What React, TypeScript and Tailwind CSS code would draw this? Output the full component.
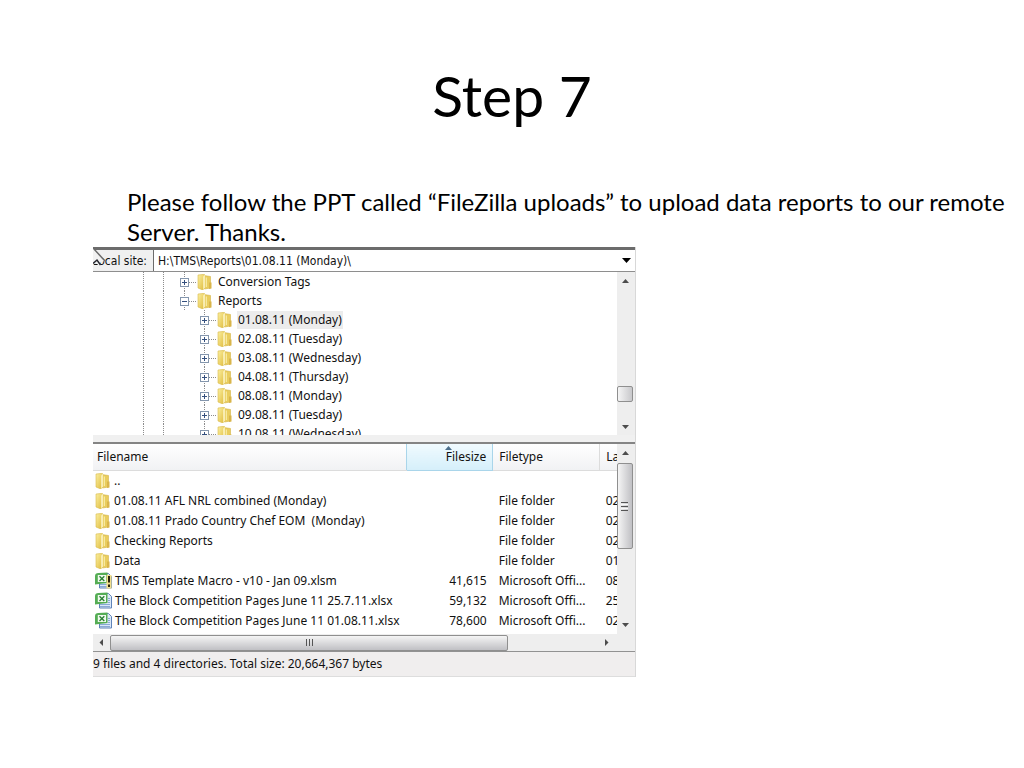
import React from "react";

interface TreeNode {
  name: string;
  level: number;
  open?: boolean;
  selected?: boolean;
}

interface FileRow {
  name: string;
  icon: "folder" | "xlsm" | "xlsx";
  size: string;
  type: string;
  modified: string;
}

const TREE: TreeNode[] = [
  { name: "Conversion Tags", level: 0 },
  { name: "Reports", level: 0, open: true },
  { name: "01.08.11 (Monday)", level: 1, selected: true },
  { name: "02.08.11 (Tuesday)", level: 1 },
  { name: "03.08.11 (Wednesday)", level: 1 },
  { name: "04.08.11 (Thursday)", level: 1 },
  { name: "08.08.11 (Monday)", level: 1 },
  { name: "09.08.11 (Tuesday)", level: 1 },
  { name: "10.08.11 (Wednesday)", level: 1 },
];

const FILES: FileRow[] = [
  { name: "..", icon: "folder", size: "", type: "", modified: "" },
  { name: "01.08.11 AFL NRL combined (Monday)", icon: "folder", size: "", type: "File folder", modified: "02" },
  { name: "01.08.11 Prado Country Chef EOM  (Monday)", icon: "folder", size: "", type: "File folder", modified: "02" },
  { name: "Checking Reports", icon: "folder", size: "", type: "File folder", modified: "02" },
  { name: "Data", icon: "folder", size: "", type: "File folder", modified: "01" },
  { name: "TMS Template Macro - v10 - Jan 09.xlsm", icon: "xlsm", size: "41,615", type: "Microsoft Offi...", modified: "08" },
  { name: "The Block Competition Pages June 11 25.7.11.xlsx", icon: "xlsx", size: "59,132", type: "Microsoft Offi...", modified: "25" },
  { name: "The Block Competition Pages June 11 01.08.11.xlsx", icon: "xlsx", size: "78,600", type: "Microsoft Offi...", modified: "02" },
];

function FolderIcon() {
  return (
    <svg className="h-4 w-4 shrink-0" viewBox="0 0 16 16" aria-hidden="true">
      <defs>
        <linearGradient id="folderFront" x1="0" y1="0" x2="1" y2="1">
          <stop offset="0" stopColor="#fbf0a0" />
          <stop offset="1" stopColor="#dfba3c" />
        </linearGradient>
      </defs>
      <path d="M7 1.500 13.500 2.500V14l-6 1z" fill="#e9cd5e" stroke="#d3b347" strokeWidth=".6" />
      <path d="M12 8.500h2.500V14.500l-2.500 .5z" fill="#d9b54a" />
      <path d="M1 1 7.500.3V14l-1.700 2L1 14z" fill="url(#folderFront)" stroke="#d8ba4c" strokeWidth=".6" />
      <path d="M7.800.6v13.200L6.300 15.400V2.800z" fill="#fff9d0" />
      <path d="M9.300 3.500v9.500" stroke="#fbf0b0" />
    </svg>
  );
}

function ExcelIcon({ macro }: { macro: boolean }) {
  return (
    <svg className="h-[17px] w-[17px] shrink-0" viewBox="0 0 17 17" aria-hidden="true">
      <path d="M4.500 1.500h9l3 3v11.500h-12z" fill="#dbe8f8" stroke="#5f83b8" />
      <path d="M5 14.500h10M5 12.500h10M13 6.500h2M13 8.500h2M13 10.500h2" stroke="#8aaad6" />
      <path d="M0 4Q0 1 3.500 1L12.500 .5V11L0 12.500z" fill="#55ad55" />
      <path d="M2.800 3h8.200v7H2.800z" fill="#f1faef" />
      <path d="M4.500 4.200 9.300 9M9.300 4.200 4.500 9" stroke="#2c8136" strokeWidth="1.400" />
      {macro && (
        <>
          <path d="M11.500 3h5v13.500h-5z" fill="#f3df8c" />
          <path d="M14 4v6.500M14 12.500V15" stroke="#2b240d" strokeWidth="2" />
        </>
      )}
    </svg>
  );
}

function Arrow({ dir }: { dir: "up" | "down" | "left" | "right" }) {
  const paths = {
    up: "M1 6 4.500 2 8 6z",
    down: "M1 3 4.500 7 8 3z",
    left: "M6 1 2.500 4.500 6 8z",
    right: "M3 1 6.500 4.500 3 8z",
  };
  return (
    <svg className="h-[9px] w-[9px]" viewBox="0 0 9 9" aria-hidden="true">
      <path d={paths[dir]} fill="#4c4c4c" />
    </svg>
  );
}

function Expander({ open }: { open?: boolean }) {
  return (
    <svg className="h-[19px] w-[18px] shrink-0" viewBox="0 0 18 19" aria-hidden="true">
      <path d="M5.500 0v19M10 10.500h8" stroke="#8c8c8c" strokeDasharray="1 1" />
      <rect x="1.500" y="6.500" width="8" height="8" fill="#fff" stroke="#8496ad" />
      <path d={open ? "M3 10.500h5" : "M3 10.500h5M5.500 8v5"} stroke="#35507e" />
    </svg>
  );
}

function TreeRow({ node }: { node: TreeNode }) {
  return (
    <li className="flex h-[19px] items-center">
      {/* guide lines of the parent levels */}
      <span className="h-full w-[50px] shrink-0" />
      <span className="h-full w-5 shrink-0 border-l border-dotted border-[#8c8c8c]" />
      <span className="h-full w-4 shrink-0 border-l border-dotted border-[#8c8c8c]" />
      {node.level === 1 && <span className="h-full w-5 shrink-0" />}
      <Expander open={node.open} />
      <FolderIcon />
      <span className={`ml-1 px-px whitespace-nowrap leading-[18px] ${node.selected ? "bg-[#ececec]" : ""}`}>{node.name}</span>
    </li>
  );
}

function LocalPanel() {
  return (
    <section className="ml-[93px] w-[53%] border-r border-[#d8d8d8] bg-white font-['Noto_Sans',sans-serif] text-[12px] text-[#111111]">
      <div className="relative flex h-[25px] border-t-[3px] border-b border-t-[#6c6c6c] border-b-[#8e8e8e]">
        <label htmlFor="local-site" className="flex w-[60px] shrink-0 items-center justify-end overflow-hidden bg-[#f0f0f0] pr-1.5 font-['DejaVu_Sans_Condensed','DejaVu_Sans',sans-serif] whitespace-nowrap">
          Local site:
        </label>
        <input
          id="local-site"
          className="min-w-0 flex-1 border-l border-[#6c6c6c] px-1 font-['DejaVu_Sans_Condensed','DejaVu_Sans',sans-serif] outline-none"
          defaultValue={"H:\\TMS\\Reports\\01.08.11 (Monday)\\"}
        />
        <button type="button" aria-label="Show recent folders" className="flex w-4 items-center justify-center">
          <svg className="h-[5px] w-[9px]" viewBox="0 0 9 5" aria-hidden="true">
            <path d="M0 0h9L4.500 5z" fill="#000" />
          </svg>
        </button>
        <svg className="absolute top-[-3px] left-0 h-5 w-4" viewBox="0 0 16 20" aria-hidden="true">
          <path d="M0 1 12 14 7 15 7 19 5 19 4 15 0 18z" fill="#f2f2f2" />
          <path d="M0 1 12 14" fill="none" stroke="#6a6a6a" strokeWidth="1.500" />
          <path d="M0 16.500 4 13l3.500 5" fill="none" stroke="#26262e" strokeWidth="1.500" />
        </svg>
      </div>

      <div className="flex h-[163px]">
        <ul className="min-w-0 flex-1 overflow-hidden">
          {TREE.map((node) => (
            <TreeRow key={node.name} node={node} />
          ))}
        </ul>
        <div className="flex w-[18px] flex-col items-center bg-[#eeeeee]">
          <button type="button" aria-label="Scroll tree up" className="flex h-[19px] items-center">
            <Arrow dir="up" />
          </button>
          <div className="flex-1" />
          <div className="h-4 w-4 self-start rounded-[2px] border border-[#8f8f8f] bg-linear-to-r from-[#f5f5f5] to-[#c8c8cb]" />
          <div className="h-4" />
          <button type="button" aria-label="Scroll tree down" className="flex h-[17px] items-center">
            <Arrow dir="down" />
          </button>
        </div>
      </div>

      <div className="h-[9px] border-b-2 border-[#848484] bg-[#f0f0f0]" />

      <div className="flex h-[190px]">
        <div className="min-w-0 flex-1 overflow-hidden">
          <table className="w-full table-fixed border-collapse text-left">
            <colgroup>
              <col />
              <col className="w-[86px]" />
              <col className="w-[107px]" />
              <col className="w-[17px]" />
            </colgroup>
            <thead>
              <tr className="h-[26px] bg-linear-to-b from-white to-[#f1f2f4]">
                <th className="border-b border-[#dcdcdc] p-0 pl-1 font-normal">Filename</th>
                <th className="relative border-x border-b border-[#a9d5ea] bg-linear-to-b from-[#f0fafe] to-[#d5effa] p-0 pr-1.5 text-right font-normal">
                  <svg className="absolute top-0.5 left-[38px] h-1 w-[7px]" viewBox="0 0 7 4" aria-hidden="true">
                    <path d="M0 4 3.500 0 7 4z" fill="#4c6f8c" />
                  </svg>
                  Filesize
                </th>
                <th className="border-r border-b border-[#dcdcdc] p-0 pl-1.5 font-normal">Filetype</th>
                <th className="overflow-hidden border-b border-[#dcdcdc] p-0 pl-1.5 font-normal whitespace-nowrap">Last modified</th>
              </tr>
            </thead>
            <tbody>
              {FILES.map((file) => (
                <tr key={file.name} className="h-5">
                  <td className="p-0 whitespace-pre">
                    <div className="flex h-5 items-center gap-[3px] pl-0.5">
                      {file.icon === "folder" ? <FolderIcon /> : <ExcelIcon macro={file.icon === "xlsm"} />}
                      <span>{file.name}</span>
                    </div>
                  </td>
                  <td className="p-0 pr-1.5 text-right">{file.size}</td>
                  <td className="p-0 pl-1.5 whitespace-nowrap">{file.type}</td>
                  <td className="overflow-hidden p-0 pl-1.5 whitespace-nowrap">{file.modified}</td>
                </tr>
              ))}
            </tbody>
          </table>
        </div>
        <div className="flex w-[18px] flex-col items-center bg-[#eeeeee]">
          <button type="button" aria-label="Scroll files up" className="flex h-[19px] items-center">
            <Arrow dir="up" />
          </button>
          <div className="flex h-[86px] w-4 flex-col items-center justify-center gap-px self-start rounded-[2px] border border-[#8f8f8f] bg-linear-to-r from-[#f5f5f5] to-[#c0c0c4]">
            <span className="h-px w-[7px] bg-[#555555]" />
            <span className="h-px w-[7px] bg-[#f8f8f8]" />
            <span className="h-px w-[7px] bg-[#555555]" />
            <span className="h-px w-[7px] bg-[#f8f8f8]" />
            <span className="h-px w-[7px] bg-[#555555]" />
          </div>
          <div className="flex-1" />
          <button type="button" aria-label="Scroll files down" className="flex h-[19px] items-center">
            <Arrow dir="down" />
          </button>
        </div>
      </div>

      <div className="flex h-[18px] items-center border-b border-[#929292] bg-[#eeeeee] pr-[18px]">
        <button type="button" aria-label="Scroll left" className="flex w-[17px] shrink-0 justify-center">
          <Arrow dir="left" />
        </button>
        <div className="flex h-4 w-[76%] items-center justify-center gap-0.5 rounded-[2px] border border-[#8f8f8f] bg-linear-to-b from-[#f5f5f5] to-[#c0c0c4]">
          <span className="h-[7px] w-px bg-[#555555]" />
          <span className="h-[7px] w-px bg-[#555555]" />
          <span className="h-[7px] w-px bg-[#555555]" />
        </div>
        <div className="flex-1" />
        <button type="button" aria-label="Scroll right" className="flex w-5 shrink-0 justify-center">
          <Arrow dir="right" />
        </button>
      </div>

      <footer className="flex h-[25px] items-center border-b border-[#dddddd] bg-[#f0eeee]">
        9 files and 4 directories. Total size: 20,664,367 bytes
      </footer>
    </section>
  );
}

export default function App() {
  return (
    <main className="min-h-screen bg-white pb-16 text-black">
      <h1 className="pt-[59px] text-center font-['Lato',sans-serif] text-[57px] leading-[72px]">Step 7</h1>
      <p className="mt-14 ml-[127px] font-['Lato',sans-serif] text-[24px] leading-[30px]">
        Please follow the PPT called “FileZilla uploads” to upload data reports to our remote
        <br />
        Server. Thanks.
      </p>
      <LocalPanel />
    </main>
  );
}
